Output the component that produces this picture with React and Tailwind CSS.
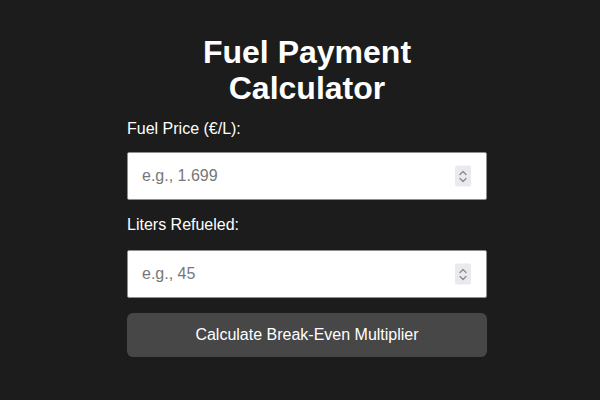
import { useState } from 'react';

const Spinner = () => (
  <span className="absolute right-[16px] top-1/2 -translate-y-1/2 w-[16px] h-[21px] bg-[#e9e9ee] rounded-[2px] flex items-center justify-center pointer-events-none">
    <svg width="10" height="14" viewBox="0 0 10 14" fill="none" stroke="#8a8a8e" strokeWidth="1.3" strokeLinecap="round" strokeLinejoin="round">
      <path d="M2 5 L5 2 L8 5" />
      <path d="M2 9 L5 12 L8 9" />
    </svg>
  </span>
);

const Field = ({ label, placeholder, value, onChange, gap }) => (
  <div className="flex flex-col">
    <label className={`text-[16px] leading-[18px] text-white ${gap}`}>{label}</label>
    <div className="relative">
      <input
        type="text"
        inputMode="decimal"
        value={value}
        onChange={e => onChange(e.target.value)}
        placeholder={placeholder}
        className="w-full h-[48px] bg-white border border-[#8f8f8f] rounded-[2px] pl-[14px] pr-[40px] text-[16px] text-[#222] placeholder:text-[#777] outline-none"
      />
      <Spinner />
    </div>
  </div>
);

export default function App() {
  const [price, setPrice] = useState('');
  const [liters, setLiters] = useState('');

  return (
    <div
      className="w-[600px] h-[400px] bg-[#1c1c1c] text-white flex justify-center"
      style={{ fontFamily: '"Liberation Sans", Arial, sans-serif' }}
    >
      <div className="w-[374px] pl-[14px] pt-[34px] flex flex-col">
        <h1 className="text-[32px] leading-[36px] font-bold text-center mb-[14px]">
          Fuel Payment
          <br />
          Calculator
        </h1>
        <Field label="Fuel Price (€/L):" placeholder="e.g., 1.699" value={price} onChange={setPrice} gap="mb-[14px]" />
        <div className="h-[16px]" />
        <Field label="Liters Refueled:" placeholder="e.g., 45" value={liters} onChange={setLiters} gap="mb-[16px]" />
        <button className="mt-[15px] h-[44px] w-full bg-[#474747] rounded-[6px] text-[16px] text-white">
          Calculate Break-Even Multiplier
        </button>
      </div>
    </div>
  );
}
